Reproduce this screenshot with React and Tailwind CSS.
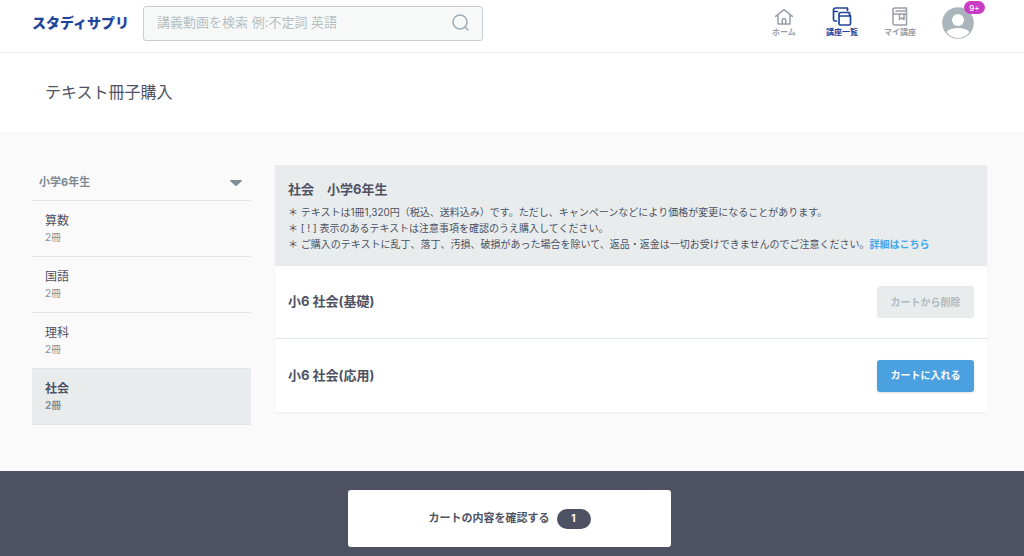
import { useState } from "react";
import clsx from "clsx";

const subjects = [
  { id: "math", name: "算数", count: 2 },
  { id: "japanese", name: "国語", count: 2 },
  { id: "science", name: "理科", count: 2 },
  { id: "social", name: "社会", count: 2 },
];

const textbooks = [
  { id: "basic", title: "小6 社会(基礎)" },
  { id: "advanced", title: "小6 社会(応用)" },
];

function HomeIcon() {
  return (
    <svg viewBox="0 0 20 20" className="size-5" fill="none" stroke="currentColor" strokeWidth="1.5" strokeLinecap="round" strokeLinejoin="round">
      <path d="M1.6 10.4 10 3.6l8.4 6.800M4 8.8V18h12V8.800" />
      <path d="M8.2 17.800v-3.400a1.800 1.800 0 0 1 3.600 0v3.400" />
    </svg>
  );
}

function CoursesIcon() {
  return (
    <svg viewBox="0 0 20 20" className="size-5" fill="none" stroke="currentColor" strokeWidth="1.7" strokeLinecap="round" strokeLinejoin="round">
      <path d="M15.500 4.500V2H3.500a2 2 0 0 0-2 2v9.500a1.500 1.500 0 0 0 1.500 1.500h1.500M1.500 5.500h4" />
      <path d="M18.500 9.500v8a1.500 1.500 0 0 1-1.500 1.500H8.500A1.500 1.500 0 0 1 7 17.500v-9a2 2 0 0 1 2-2h8.500v3M7 10h11.500" />
    </svg>
  );
}

function MyCoursesIcon() {
  return (
    <svg viewBox="0 0 20 20" className="size-5" fill="none" stroke="currentColor" strokeWidth="1.5" strokeLinecap="round" strokeLinejoin="round">
      <path d="M16.500 2H5a2 2 0 0 0-2 2v13a2 2 0 0 0 2 2h11.500V8H5a2 2 0 0 1-2-2M16.500 2v6" />
      <path d="M6 5h10M9.500 8v5.500l2.200-1.500 2.300 1.500V8" />
    </svg>
  );
}

function SearchIcon() {
  return (
    <svg viewBox="0 0 18 18" className="size-[18px]" fill="none" stroke="currentColor" strokeWidth="1.600" strokeLinecap="round">
      <circle cx="9" cy="8" r="7" />
      <path d="m14 13 3 3" />
    </svg>
  );
}

function AvatarIcon() {
  return (
    <svg viewBox="0 0 32 32" className="size-8">
      <circle cx="16" cy="16" r="15.800" fill="#aab5bb" />
      <circle cx="16" cy="13" r="6" fill="#fff" />
      <path d="M4.500 25c2.500-3 6.500-4 11.500-4s9 1 11.500 4A15 15 0 0 1 16 31a15 15 0 0 1-11.500-6Z" fill="#fff" />
    </svg>
  );
}

const navItems = [
  { label: "ホーム", Icon: HomeIcon },
  { label: "講座一覧", Icon: CoursesIcon, active: true },
  { label: "マイ講座", Icon: MyCoursesIcon },
];

function Header() {
  return (
    <header className="flex h-[53px] items-center border-b border-[#f0f1f1] bg-white pr-[50px] pb-1.5 pl-8">
      <a href="#" className="mr-3.5 shrink-0 text-sm font-black text-[#1f459c]">
        スタディサプリ
      </a>
      <form
        role="search"
        onSubmit={(e) => e.preventDefault()}
        className="flex h-[35px] w-[340px] items-center rounded-[3px] border border-[#c5ced1] bg-[#f7f9f9] px-[13px]"
      >
        <input
          type="search"
          aria-label="講義動画を検索"
          placeholder="講義動画を検索 例:不定詞 英語"
          className="min-w-0 flex-1 bg-transparent text-[13px] outline-none placeholder:text-[#b5bfc3]"
        />
        <button type="submit" aria-label="検索" className="text-[#a3afb5]">
          <SearchIcon />
        </button>
      </form>
      <nav className="ml-auto flex pb-0.5">
        {navItems.map(({ label, Icon, active }) => (
          <a
            key={label}
            href="#"
            className={clsx("flex w-[58px] flex-col items-center font-bold", active ? "text-[#1f459c]" : "text-[#9a9ea8]")}
          >
            <Icon />
            <span className="text-[8px] leading-3">{label}</span>
          </a>
        ))}
      </nav>
      <button type="button" aria-label="アカウント" className="relative ml-[13px] shrink-0">
        <AvatarIcon />
        <span className="absolute -top-1.5 left-[22px] flex h-[13px] w-[21px] items-center justify-center rounded-full bg-[#cb3cc5] text-[8px] font-medium text-white">
          9+
        </span>
      </button>
    </header>
  );
}

function Sidebar({ selected, onSelect }) {
  return (
    <aside className="w-[219px] shrink-0">
      <div className="relative border-b border-[#dfe6e8]">
        <select aria-label="学年" className="block h-[35px] w-full appearance-none bg-transparent pl-[7px] text-[11px] font-bold text-[#7b8a92] outline-none">
          <option>小学6年生</option>
        </select>
        <svg viewBox="0 0 12 6" className="pointer-events-none absolute top-[15px] right-[9px] h-1.5 w-3" fill="#7f8f98">
          <path d="M.5 0h11l.5 1-5 4.500q-1 .8-2 0L0 1Z" />
        </svg>
      </div>
      <ul>
        {subjects.map((subject) => {
          const active = subject.id === selected;
          return (
            <li key={subject.id}>
              <button
                type="button"
                onClick={() => onSelect(subject.id)}
                className={clsx(
                  "flex h-14 w-full flex-col justify-center border-b border-[#dfe6e8] pl-[13px] text-left",
                  active && "bg-[#e8eced] font-bold"
                )}
              >
                <span className="text-[12px] leading-4 text-[#4e5263]">{subject.name}</span>
                <span className="text-[10px] leading-4 text-[#83919a]">{subject.count}冊</span>
              </button>
            </li>
          );
        })}
      </ul>
    </aside>
  );
}

function TextbookRow({ book, inCart }) {
  return (
    <li className="flex h-[73px] items-center justify-between px-[13px]">
      <h3 className="text-[13px] font-bold">{book.title}</h3>
      <button
        type="button"
        className={clsx(
          "h-8 w-[97px] rounded-[3px] text-[10px] font-bold",
          inCart ? "bg-[#e8eced] text-[#b0b9be]" : "bg-[#4ba1e0] text-white shadow"
        )}
      >
        {inCart ? "カートから削除" : "カートに入れる"}
      </button>
    </li>
  );
}

export default function App() {
  const [selected, setSelected] = useState("social");
  const cart = ["basic"];

  return (
    <div className="flex min-h-screen flex-col bg-[#fafafa] font-[Inter,'Noto_Sans_CJK_JP',sans-serif] text-[#4e5263]">
      <Header />
      <div className="flex h-[79px] items-center bg-white px-[45px] pb-0.5">
        <h1 className="text-base">テキスト冊子購入</h1>
      </div>

      <main className="flex flex-1 items-start gap-6 pt-[33px] pr-[37px] pb-11 pl-8">
        <Sidebar selected={selected} onSelect={setSelected} />
        <section className="min-w-0 flex-1 bg-white shadow-xs">
          <div className="bg-[#e8eced] px-[13px] py-3.5">
            <h2 className="mb-[5px] text-[13px] leading-5 font-bold">社会　小学6年生</h2>
            <div className="text-[10px] leading-4">
              <p>＊ テキストは1冊1,320円（税込、送料込み）です。ただし、キャンペーンなどにより価格が変更になることがあります。</p>
              <p>＊ [ ! ] 表示のあるテキストは注意事項を確認のうえ購入してください。</p>
              <p>
                ＊ ご購入のテキストに乱丁、落丁、汚損、破損があった場合を除いて、返品・返金は一切お受けできませんのでご注意ください。
                <a href="#" className="font-bold text-[#45a7ea]">詳細はこちら</a>
              </p>
            </div>
          </div>
          <ul className="divide-y divide-[#e2e8e9]">
            {textbooks.map((book) => (
              <TextbookRow key={book.id} book={book} inCart={cart.includes(book.id)} />
            ))}
          </ul>
        </section>
      </main>

      <footer className="flex h-[85px] items-center justify-center bg-[#4e5162] pt-2.5 pr-[5px]">
        <button type="button" className="flex h-[57px] w-[323px] items-center justify-center gap-[7px] rounded-[3px] bg-white text-[11px] font-bold">
          カートの内容を確認する
          <span className="flex h-5 w-[34px] items-center justify-center rounded-full bg-[#4e5162] text-[10px] font-bold text-white">
            {cart.length}
          </span>
        </button>
      </footer>
    </div>
  );
}
